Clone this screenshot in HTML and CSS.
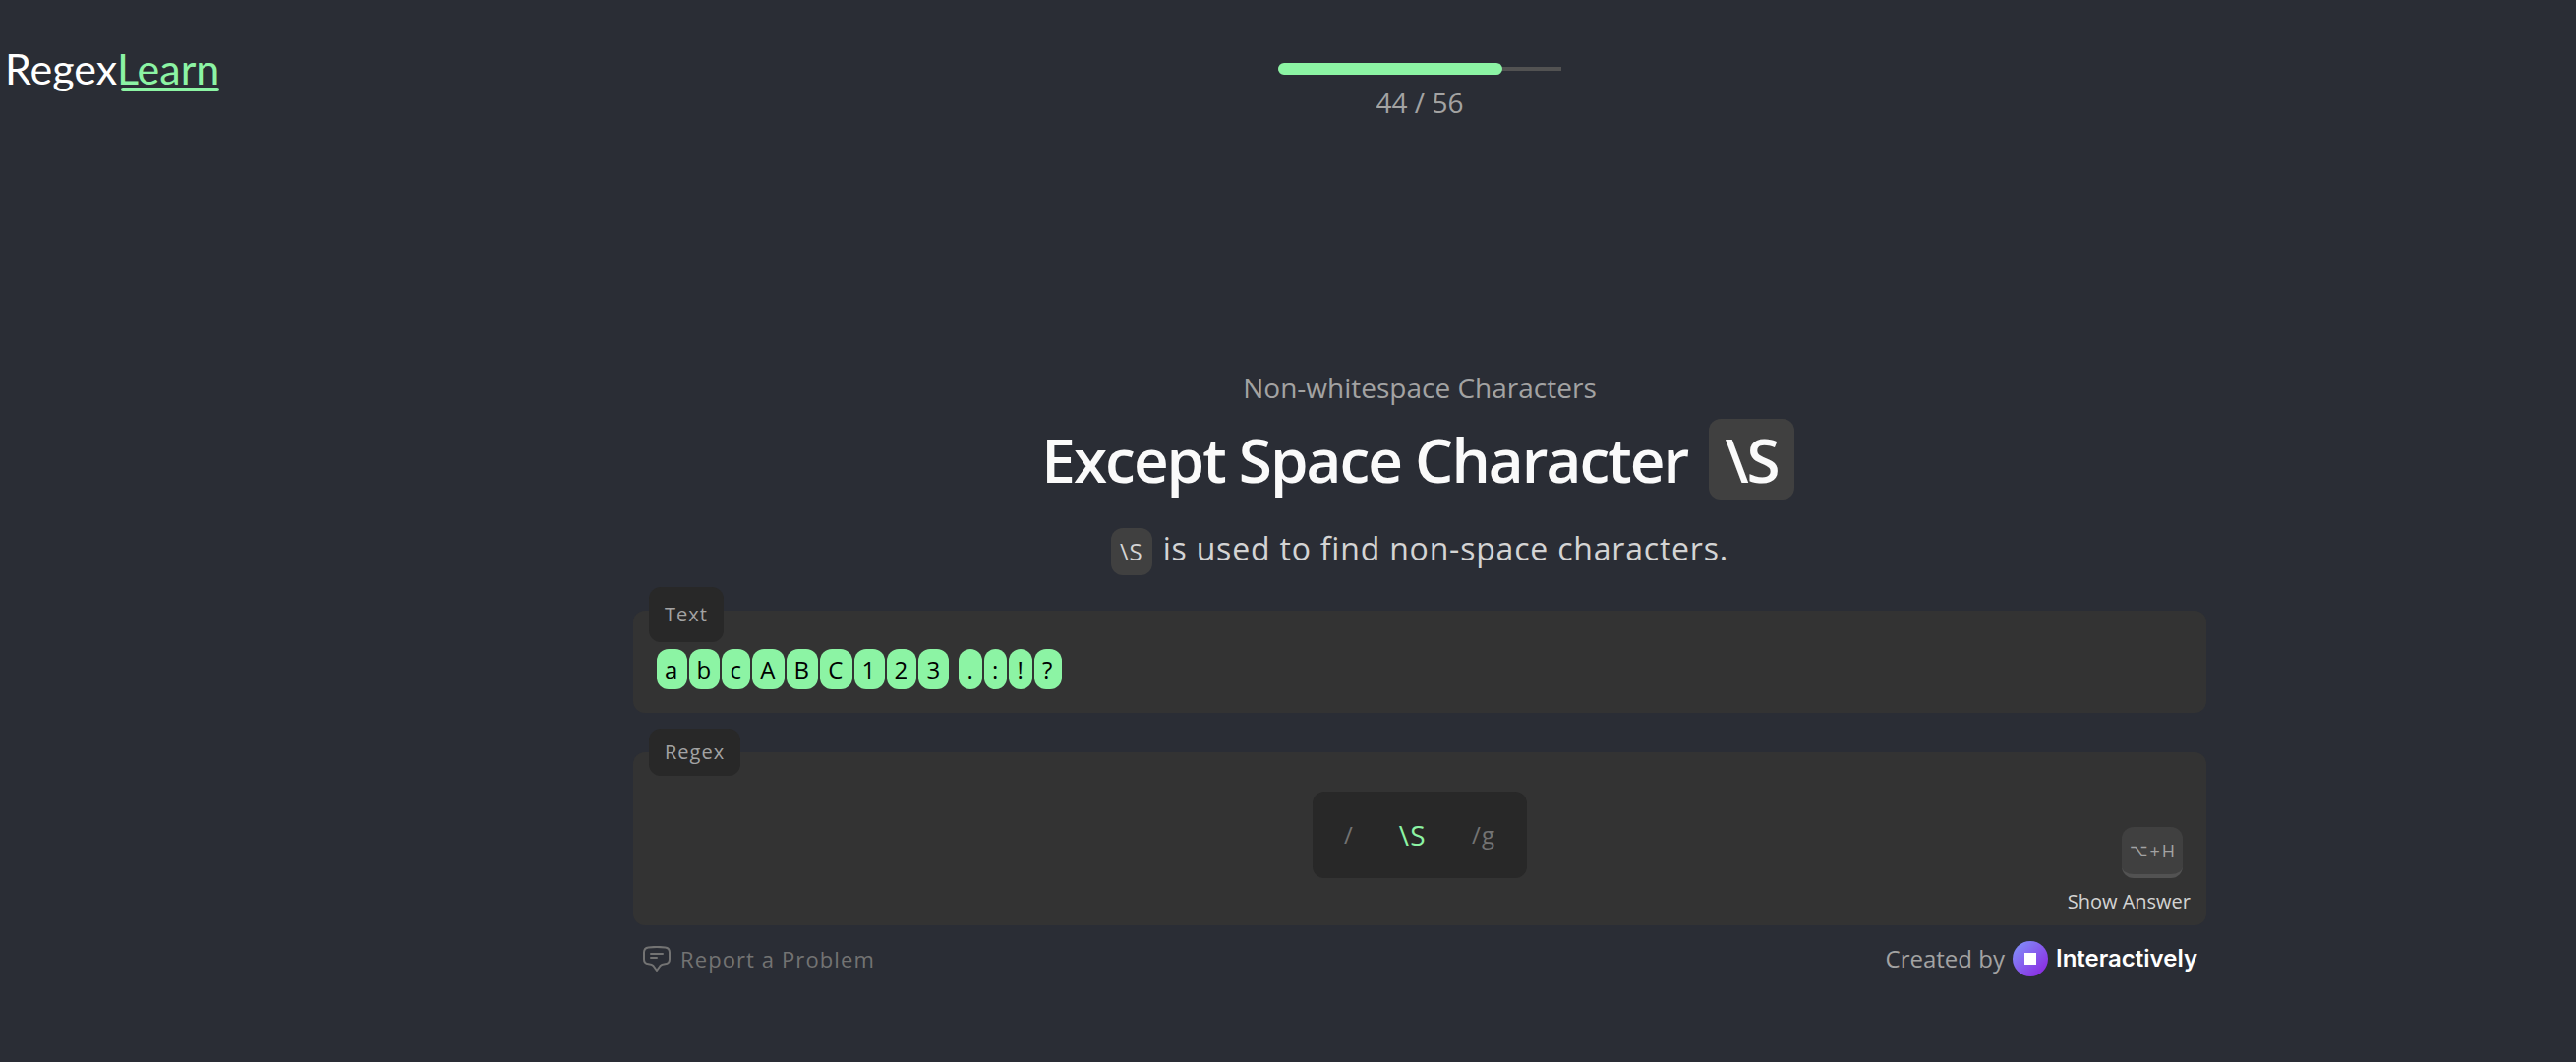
FILE: index.html
```html
<!DOCTYPE html>
<html lang="en">
<head>
<meta charset="utf-8">
<title>Except Space Character - RegexLearn</title>
<meta name="viewport" content="width=device-width, initial-scale=1">
<link rel="stylesheet" href="styles.css">
</head>
<body>
<div class="page">
  <header class="header">
    <a class="logo" href="#">Regex<span class="logo-accent">Learn</span></a>
    <div class="progress">
      <div class="progress-track"><div class="progress-fill" style="width:79%"></div></div>
      <span class="progress-count">44 / 56</span>
    </div>
  </header>
  <main class="lesson">
    <div class="intro">
      <p class="topic">Non-whitespace Characters</p>
      <h1 class="title">Except Space Character <code class="title-code">\S</code></h1>
      <p class="description"><code class="inline-code">\S</code> is used to find non-space characters.</p>
    </div>
    <section class="panel text-panel">
      <h2 class="tag tag-tall">Text</h2>
      <div class="sample"><mark>a</mark><mark>b</mark><mark>c</mark><mark>A</mark><mark>B</mark><mark>C</mark><mark>1</mark><mark>2</mark><mark>3</mark><span class="blank"> </span><mark>.</mark><mark>:</mark><mark>!</mark><mark>?</mark></div>
    </section>
    <section class="panel regex-panel">
      <label class="tag" for="regex">Regex</label>
      <div class="field">
        <span>/</span>
        <input class="regex-input" id="regex" type="text" value="\S" spellcheck="false" autocomplete="off">
        <span>/g</span>
      </div>
      <button class="answer" type="button">
        <kbd class="key"><span class="option">⌥</span><span>+</span><span>H</span></kbd>
        <span>Show Answer</span>
      </button>
    </section>
    <footer class="footer">
      <a class="report" href="#">
        <svg class="report-icon" viewBox="0 0 28 26" fill="none" stroke="currentColor" stroke-width="2" stroke-linecap="round" stroke-linejoin="round" aria-hidden="true">
          <path d="M1 6.500C1 3.500 2.500 1.700 5.500 1.400C11 .8 17 .8 22.500 1.400C25.500 1.700 27 3.500 27 6.500V13.500C27 16.500 25.500 18 22.500 18.300C19 18.600 18.800 18.700 17.600 20L14 25L10.400 20C9.200 18.700 9 18.600 5.500 18.300C2.500 18 1 16.500 1 13.500Z"/>
          <path d="M8 8H20M8 12H14"/>
        </svg>
        <span>Report a Problem</span>
      </a>
      <div class="credit">
        <span>Created by</span>
        <a class="brand" href="#">
          <svg class="brand-icon" viewBox="0 0 36 36" aria-hidden="true">
            <defs><linearGradient id="disc" x1="0" y1="0" x2="1" y2="1"><stop offset="0.1" stop-color="#818cf8"/><stop offset="0.9" stop-color="#8b2be2"/></linearGradient></defs>
            <circle cx="18" cy="18" r="18" fill="url(#disc)"/>
            <rect x="12" y="12" width="12" height="12" fill="#fff"/>
          </svg>
          <span>Interactively</span>
        </a>
      </div>
    </footer>
  </main>
</div>
</body>
</html>
```
FILE: styles.css
```css
* {
  box-sizing: border-box;
}

body {
  margin: 0;
  background: #2a2d35;
  color: #a3a3a3;
  font: 24px/32px "Open Sans", "Noto Sans", sans-serif;
}

h1, h2, p {
  margin: 0;
  font-weight: 400;
}

a {
  color: inherit;
  text-decoration: none;
}

code, kbd, button, input {
  font-family: inherit;
}

/* The logo keeps its own column; the lesson is centred in the rest. */
.page {
  --rail: 268px;
  padding-top: 48px;
}

.header {
  display: grid;
  grid-template-columns: var(--rail) 1fr;
  align-items: start;
}

.logo {
  justify-self: start;
  padding-left: 5px;
  color: #fff;
  font: 43px/44px Lato, sans-serif;
}

.logo-accent {
  position: relative;
  display: inline-block;
  color: #8cf4a4;
}

.logo-accent::after {
  content: "";
  position: absolute;
  left: 4px;
  right: 0;
  bottom: -1px;
  height: 4px;
  border-radius: 2px;
  background: #8cf4a4;
}

.progress {
  justify-self: center;
  width: 288px;
  padding-top: 16px;
  text-align: center;
}

.progress-track {
  display: flex;
  align-items: center;
  height: 12px;
  background: linear-gradient(#525252, #525252) center / 100% 4px no-repeat;
}

.progress-fill {
  height: 12px;
  border-radius: 6px;
  background: #8cf4a4;
}

.progress-count {
  display: block;
  margin-top: 8px;
  font-size: 28px;
  line-height: 40px;
}

.lesson {
  max-width: 1868px;
  margin: 0 auto;
  padding: 250px 0 24px var(--rail);
}

@media (min-width: 1869px) {
  .lesson {
    width: calc(1600px + var(--rail));
    margin: 0 calc((100% - 1600px - var(--rail)) / 2);
  }
}

.intro {
  text-align: center;
}

.topic {
  font-size: 28px;
  line-height: 40px;
}

.title {
  margin-top: 12px;
  color: #fafafa;
  font-size: 62px;
  font-weight: 600;
  line-height: 82px;
  letter-spacing: -2px;
}

.title-code {
  display: inline-block;
  margin: 0 4px 0 8px;
  padding: 0 16px;
  border-radius: 12px;
  background: #404040;
}

.description {
  margin-top: 26px;
  color: #d4d4d4;
  font-size: 32px;
  line-height: 48px;
  letter-spacing: 0.025em;
}

.inline-code {
  display: inline-block;
  margin-right: 2px;
  padding: 0 9px;
  border-radius: 12px;
  background: #404040;
  font-size: 24px;
}

.panel {
  position: relative;
  border-radius: 12px;
  background: #333;
}

.text-panel {
  margin-top: 36px;
  padding: 39px 24px 24px;
}

.tag {
  position: absolute;
  top: -24px;
  left: 16px;
  padding: 8px 16px;
  border-radius: 12px;
  background: #282828;
  font-size: 20px;
  line-height: 32px;
  letter-spacing: 0.05em;
}

.tag-tall {
  padding: 12px 16px;
}

.sample {
  display: flex;
  gap: 2px;
  letter-spacing: 0.05em;
}

.sample mark {
  padding: 4px 8px;
  border-radius: 12px;
  background: #8cf4a4;
  color: #000;
  line-height: 33px;
}

.blank {
  width: 6px;
}

.regex-panel {
  display: flex;
  justify-content: center;
  margin-top: 40px;
  padding: 40px 24px 48px;
}

.field {
  display: flex;
  align-items: center;
  height: 88px;
  padding: 0 32px;
  border-radius: 12px;
  background: #282828;
  color: #737373;
  letter-spacing: 0.05em;
}

.regex-input {
  width: 120px;
  padding: 0;
  border: 0;
  outline: 0;
  background: none;
  color: #8cf4a4;
  font-size: 28px;
  letter-spacing: 0.05em;
  text-align: center;
}

.answer {
  position: absolute;
  right: 16px;
  bottom: 8px;
  display: flex;
  flex-direction: column;
  align-items: flex-end;
  gap: 8px;
  padding: 0;
  border: 0;
  background: none;
  color: #d4d4d4;
  font-size: 20px;
  line-height: 32px;
}

.key {
  display: flex;
  align-items: center;
  gap: 2px;
  height: 52px;
  margin-right: 8px;
  padding: 0 8px;
  border-bottom: 4px solid #525252;
  border-radius: 12px;
  background: #404040;
  color: #a3a3a3;
  font-size: 18px;
}

.option {
  font-family: "DejaVu Sans", sans-serif;
  font-size: 16px;
}

.footer {
  display: flex;
  align-items: center;
  justify-content: space-between;
  padding: 16px 9px 16px 10px;
}

.report, .credit, .brand {
  display: flex;
  align-items: center;
  gap: 8px;
}

.report {
  gap: 10px;
  color: #737373;
  font-size: 22px;
  letter-spacing: 0.05em;
}

.report-icon {
  width: 28px;
  height: 26px;
}

.brand {
  color: #fff;
  font-family: Inter, sans-serif;
  font-weight: 600;
}

.brand-icon {
  width: 36px;
  height: 36px;
}
```
